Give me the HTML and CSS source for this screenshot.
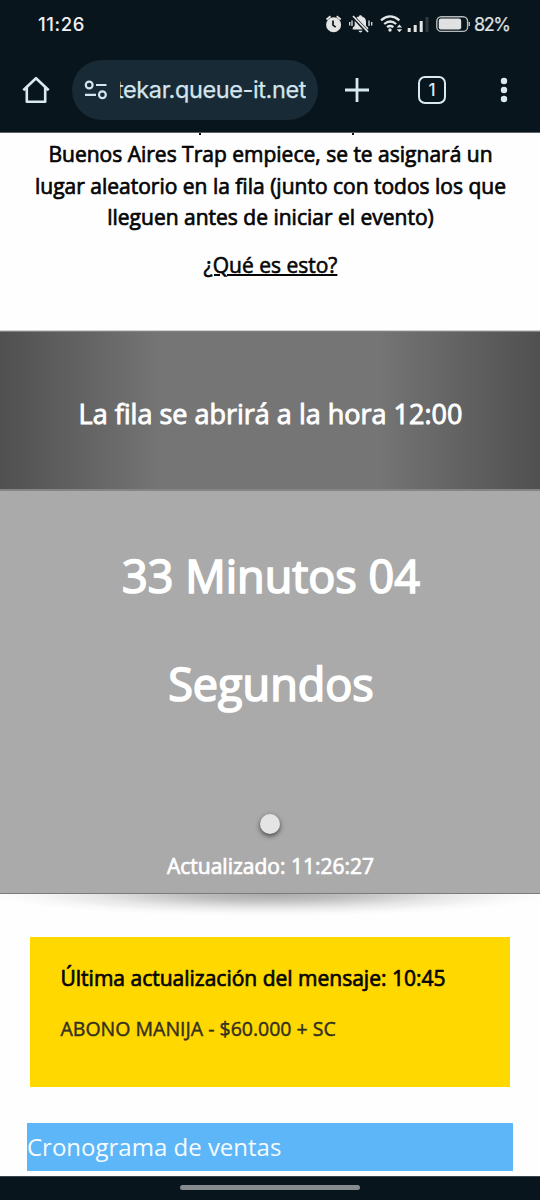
FILE: index.html
```html
<!DOCTYPE html>
<html lang="es">
<head>
<meta charset="utf-8">
<title>Fila</title>
<link rel="stylesheet" href="styles.css">
</head>
<body>
<header class="chrome">
  <div class="status">
    <span class="clock">11:26</span>
    <svg class="status-icons" width="146" height="20" viewBox="324 14 146 20">
      <g fill="#e3e4e4">
        <circle cx="333.600" cy="24.800" r="7.500"/>
        <path d="M326.500 19.500l4-3.300M340.700 19.500l-4-3.300" stroke="#e3e4e4" stroke-width="1.800" fill="none"/>
        <path d="M333 20.500v4.600l2.700 2" stroke="#09151c" stroke-width="1.700" fill="none"/>
        <path d="M352.700 29.500v-1.800l2-2v-4.200c0-3 2-4.500 4.200-5 .2-1.700 2.900-1.700 3.100 0 2.500.6 4 2.300 4 5v4.200l2.200 2v1.800z"/>
        <path d="M358.500 30.700h4q-.5 1.700-2 1.700t-2-1.700z"/>
      </g>
      <path d="M353.500 17l13.500 14.500" stroke="#09151c" stroke-width="3.600"/>
      <path d="M353 16l15 15.800" stroke="#e3e4e4" stroke-width="1.700"/>
      <path d="M349.700 22v3.500M352 20.500v5.500M369 20.500v5.500M371.700 22v3.500" stroke="#e3e4e4" stroke-width="1.300"/>
      <g fill="none" stroke="#e3e4e4" stroke-width="2.200">
        <path d="M381 20.300q9.200-7.800 18.400 0M384.200 24q6-5 12 0M387 27.200q3.200-2.400 6.400 0"/>
      </g>
      <circle cx="390" cy="30" r="1.700" fill="#e3e4e4"/>
      <path d="M396.700 27.500l2.700-3 2.700 3zM396.700 29.300l2.700 3 2.700-3z" fill="#e3e4e4"/>
      <path d="M407.700 28v4h3v-4zM413.700 25v7h3v-7zM419.700 21v11h3V21z" fill="#e3e4e4"/>
      <path d="M425.500 17v15h3V17z" fill="#30383d"/>
      <rect x="436.800" y="16.800" width="30.800" height="14.600" rx="4.500" fill="none" stroke="#b5b9bb" stroke-width="1.400"/>
      <rect x="438.800" y="18.500" width="22.400" height="11" rx="2.200" fill="#e0e1e2"/>
      <path d="M469.300 22v4" stroke="#b5b9bb" stroke-width="1.500"/>
    </svg>
    <span class="percent">82%</span>
  </div>
  <div class="toolbar">
    <svg class="home" width="28" height="28" viewBox="0 0 28 28" fill="none" stroke="#d9e9f2" stroke-width="2.600" stroke-linejoin="round">
      <path d="M1.300 14.300L14 2.200l12.700 12.100M4.800 11.500v14.300h18.400V11.500"/>
    </svg>
    <div class="address">
      <svg class="tune" width="24" height="20" viewBox="0 0 24 20" fill="none" stroke="#d4e5ee" stroke-width="2.200">
        <circle cx="5.200" cy="5" r="3.400"/><circle cx="18.400" cy="14.800" r="3.400"/>
        <path d="M12 5h10.500M1 14.800h11"/>
      </svg>
      <div class="url"><span class="url-text">tekar.queue-it.net</span></div>
    </div>
    <svg class="plus" width="24" height="24" viewBox="0 0 24 24" stroke="#d9e9f2" stroke-width="2.800"><path d="M12 0v24M0 12h24"/></svg>
    <div class="tabs">1</div>
    <svg class="more" width="8" height="26" viewBox="0 0 8 26" fill="#d9e9f2"><circle cx="4" cy="4" r="3.200"/><circle cx="4" cy="13" r="3.200"/><circle cx="4" cy="22" r="3.200"/></svg>
  </div>
</header>
<main class="page">
  <section class="intro">
    <div class="descenders"><i class="tail"></i><i class="tail"></i></div>
    <p class="intro-text">Buenos Aires Trap empiece, se te asignará un<br>lugar aleatorio en la fila (junto con todos los que<br>lleguen antes de iniciar el evento)</p>
    <a class="what">¿Qué es esto?</a>
  </section>
  <section class="banner"><h1 class="banner-title">La fila se abrirá a la hora 12:00</h1></section>
  <section class="countdown">
    <p class="time">33 Minutos 04<br>Segundos</p>
    <div class="dot"></div>
    <p class="updated">Actualizado: 11:26:27</p>
  </section>
  <div class="shadow"></div>
  <section class="message">
    <h2 class="message-title">Última actualización del mensaje: 10:45</h2>
    <p class="message-text">ABONO MANIJA - $60.000 + SC</p>
  </section>
  <section class="schedule">Cronograma de ventas</section>
</main>
<footer class="nav"><div class="handle"></div></footer>
</body>
</html>
```

FILE: styles.css
```css
* { box-sizing: border-box; margin: 0; padding: 0; }
body { width: 540px; height: 1200px; overflow: hidden; display: flex; flex-direction: column; background: #fefefe; font-family: "Open Sans", sans-serif; color: #050505; }
.chrome { height: 133px; flex: none; background: #09151c; border-bottom: 1px solid #5d6367; font-family: Inter, sans-serif; }
.status { height: 48px; display: flex; align-items: center; padding-left: 38px; color: #eef0f1; }
.clock { width: 286px; font-size: 18.5px; font-weight: 500; letter-spacing: 0.6px; }
.status-icons { flex: none; display: block; }
.percent { margin-left: 4px; font-size: 18px; letter-spacing: -1.4px; color: #dfe1e2; -webkit-text-stroke: 0.2px; }
.toolbar { height: 84px; display: flex; align-items: center; padding-left: 22px; }
.home, .plus, .more, .tune { flex: none; display: block; }
.address { width: 246px; height: 60px; margin-left: 22px; padding-left: 12px; border-radius: 30px; background: #182a35; display: flex; align-items: center; }
.url { width: 186px; margin-left: 12px; overflow: hidden; display: flex; justify-content: flex-end; }
.url-text { flex: none; font-size: 23.5px; line-height: 32px; letter-spacing: -0.4px; color: #d4e5ee; white-space: nowrap; -webkit-text-stroke: 0.25px; }
.plus { margin-left: 27px; }
.tabs { width: 28px; height: 28px; margin-left: 49px; border: 2.5px solid #d9e9f2; border-radius: 7px; color: #d9e9f2; font-size: 17px; font-weight: 500; line-height: 24px; text-align: center; flex: none; }
.more { margin-left: 54px; }
.page { height: 1043px; flex: none; overflow: hidden; }
.intro { height: 198px; text-align: center; white-space: nowrap; border-bottom: 1px solid #ced3d2; }
.descenders { height: 6px; padding-left: 199px; display: flex; gap: 151px; }
.tail { width: 2px; height: 2px; background: #111; }
.intro-text { font-size: 21px; line-height: 31.5px; padding-left: 1px; -webkit-text-stroke: 0.7px; }
.what { display: block; margin-top: 16px; font-size: 21px; line-height: 31px; padding-left: 1px; text-decoration: underline; text-decoration-thickness: 1.5px; -webkit-text-stroke: 0.6px; }
.banner { height: 160px; display: flex; align-items: center; justify-content: center; background: linear-gradient(90deg, #505050, #757575 30%, #757575 70%, #505050); border-top: 1px solid #818181; border-bottom: 2px solid #858585; padding: 5px 0 0 1px; }
.banner-title { font-size: 27px; font-weight: 400; color: #fff; white-space: nowrap; -webkit-text-stroke: 0.9px; }
.countdown { height: 403px; padding-top: 31px; background: #aaa; border-bottom: 1px solid #7b7b7b; color: #fff; text-align: center; display: flex; flex-direction: column; align-items: center; }
.time { padding-left: 2px; font-size: 45px; line-height: 108px; white-space: nowrap; -webkit-text-stroke: 1.7px; }
.dot { width: 20px; height: 20px; margin-top: 76px; border-radius: 50%; background: #e4e4e4; box-shadow: 0 2px 5px #444; }
.updated { margin-top: 17px; padding-left: 1px; font-size: 21px; line-height: 31px; white-space: nowrap; -webkit-text-stroke: 0.7px; }
.shadow { height: 43px; background: radial-gradient(ellipse 280px 22px at 50% 0, #aaa 0, #c0c0c0 30%, #e6e6e6 62%, #f8f8f8 85%, #fefefe 100%); }
.message { width: 480px; height: 150px; margin-left: 30px; padding: 26px 0 0 30.5px; background: #ffd800; white-space: nowrap; }
.message-title { font-size: 21px; line-height: 31px; font-weight: 400; -webkit-text-stroke: 0.7px; }
.message-text { margin-top: 20px; font-size: 19.5px; line-height: 30px; color: #333021; -webkit-text-stroke: 0.45px; }
.schedule { width: 486px; height: 48px; margin: 36px 0 0 27px; background: #5cb6f7; color: #f7fbff; font-size: 24px; line-height: 47px; white-space: nowrap; }
.nav { height: 24px; flex: none; background: #09151c; border-top: 1px solid #3a444a; display: flex; justify-content: center; padding-top: 8px; }
.handle { width: 180px; height: 5px; border-radius: 3px; background: #858b8e; }
```
